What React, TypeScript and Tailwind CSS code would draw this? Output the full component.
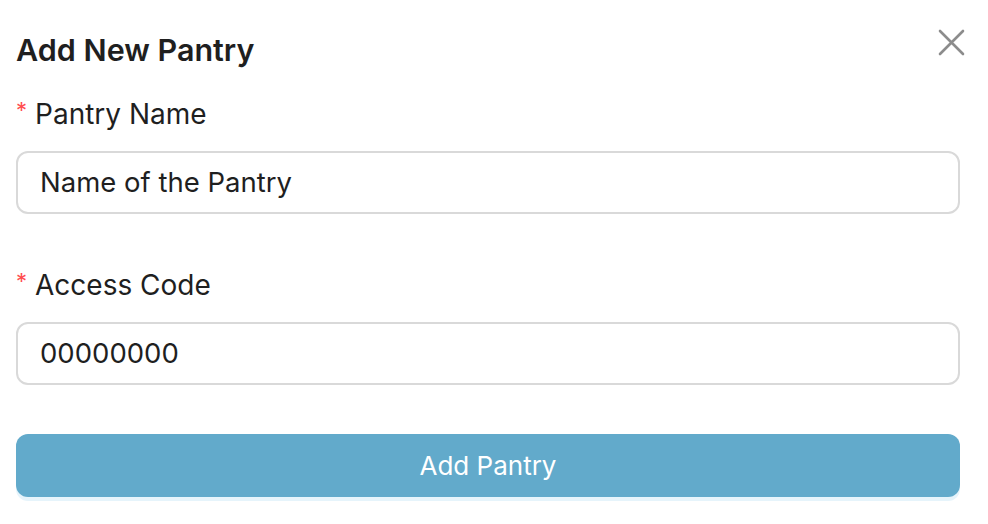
function Field({ label, value }: { label: string; value: string }) {
  return (
    <div className="flex flex-col">
      <label className="flex items-center h-[40px] text-[28px] text-[#1f1f1f]">
        <span className="mr-[8px] text-[22px] leading-none text-[#ff4d4f] -translate-y-[4px]">*</span>
        {label}
      </label>
      <div className="mt-[17px] h-[63px] w-[944px] rounded-[12px] border-2 border-[#d9d9d9] bg-white flex items-center px-[22px] text-[27.5px] text-[#1f1f1f]">
        {value}
      </div>
    </div>
  );
}

export default function App() {
  return (
    <div className="w-[988px] h-[524px] bg-white font-['Inter','Noto_Sans',sans-serif] relative">
      <button className="absolute left-[938px] top-[29px] text-[#8c8c8c]" aria-label="Close">
        <svg width="27" height="27" viewBox="0 0 27 27" fill="none" stroke="currentColor" strokeWidth="2.6" strokeLinecap="round">
          <path d="M2 2L25 25M25 2L2 25" />
        </svg>
      </button>
      <div className="pl-[16px] pt-[28px]">
        <h2 className="text-[30.5px] font-semibold leading-[44px] text-[#1f1f1f]">Add New Pantry</h2>
        <div className="mt-[22px] flex flex-col gap-[51px]">
          <Field label="Pantry Name" value="Name of the Pantry" />
          <Field label="Access Code" value="00000000" />
        </div>
        <button className="mt-[49px] h-[63px] w-[944px] rounded-[12px] bg-[#62aacb] text-white text-[26px] shadow-[0_4px_0_#e6f4fb]">
          Add Pantry
        </button>
      </div>
    </div>
  );
}
